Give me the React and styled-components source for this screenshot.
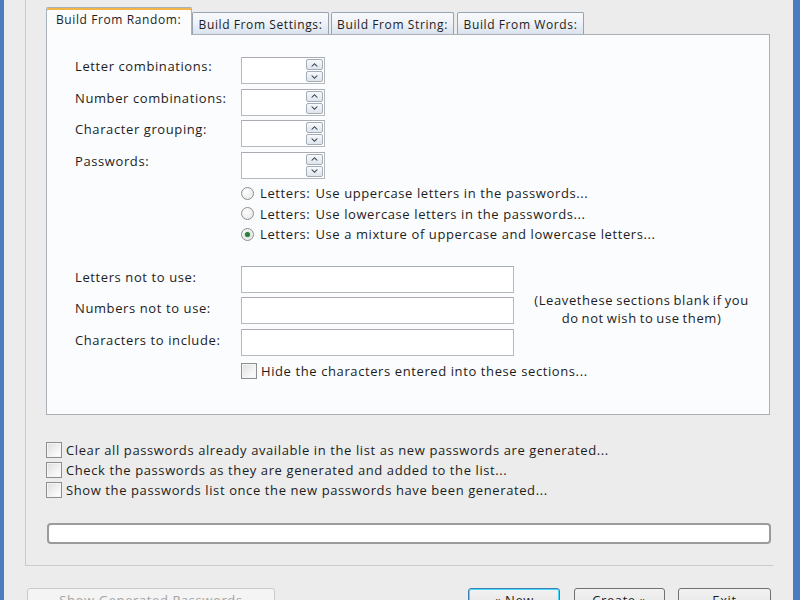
import React, { useState } from "react";
import styled, { createGlobalStyle, css } from "styled-components";

const Global = createGlobalStyle`
  html, body {
    margin: 0;
    padding: 0;
    background: #ececec;
    overflow: hidden;
  }
`;

const Window = styled.div`
  width: 800px;
  height: 600px;
  box-sizing: border-box;
  border-left: 4px solid #4b7cc0;
  border-right: 7px solid #4b7cc0;
  background: #ececec;
  font-family: "Open Sans", "Segoe UI", sans-serif;
  font-size: 13px;
  letter-spacing: 0.6px;
  color: #1d1d1d;
  overflow: hidden;
  display: flex;
  flex-direction: column;
`;

const GroupBox = styled.div`
  margin-left: 21px;
  width: 748px;
  height: 566px;
  flex-shrink: 0;
  box-sizing: border-box;
  border-left: 1px solid #cbcbcb;
  border-bottom: 1px solid #cbcbcb;
  padding: 7px 0 0 20px;
  display: flex;
  flex-direction: column;
`;

const TabBar = styled.div`
  display: flex;
  align-items: flex-end;
  height: 27px;
  position: relative;
  z-index: 1;
`;

const Tab = styled.div`
  box-sizing: border-box;
  width: ${(p) => p.$w}px;
  margin-left: ${(p) => p.$gap || 0}px;
  display: flex;
  align-items: center;
  font-size: 12px;
  white-space: nowrap;
  border: 1px solid #98a3b2;
  border-bottom: none;
  border-radius: 2px 2px 0 0;
  ${(p) =>
    p.$active
      ? css`
          height: 28px;
          margin-bottom: -1px;
          padding: 0 0 5px 9px;
          background: #fcfcfd;
          border-color: #a9b1bc;
          box-shadow: inset 0 2px 0 #f0b546;
        `
      : css`
          height: 22px;
          justify-content: center;
          padding-top: 1px;
          background: linear-gradient(#f8f9fb 0%, #eef2f7 50%, #d9e2ee 100%);
        `}
`;

const Panel = styled.div`
  width: 724px;
  height: 381px;
  box-sizing: border-box;
  border: 1px solid #aab0b6;
  background: #fbfcfd;
  padding: 22px 0 0 28px;
  display: flex;
  flex-direction: column;
`;

const SpinRow = styled.div`
  display: flex;
  align-items: flex-start;
  height: 31.5px;
`;

const Label = styled.div`
  width: 166px;
  line-height: 18px;
  padding-top: ${(p) => p.$top ?? 0}px;
  flex-shrink: 0;
  white-space: nowrap;
`;

const SpinBox = styled.div`
  width: 84px;
  height: 27px;
  box-sizing: border-box;
  border: 1px solid #b5b9be;
  border-top-color: #a9adb3;
  background: #ffffff;
  display: flex;
  justify-content: flex-end;
  align-items: center;
  padding-right: 1px;
`;

const SpinButtons = styled.div`
  width: 17px;
  height: 23px;
  display: flex;
  flex-direction: column;
  gap: 1px;
`;

const SpinHalf = styled.div`
  flex: 1;
  border: 1px solid #a3adb9;
  border-radius: 2px;
  background: linear-gradient(#f7f9fb, #dfe5ec);
  display: flex;
  align-items: center;
  justify-content: center;
`;

const RadioList = styled.div`
  margin-left: 166px;
  display: flex;
  flex-direction: column;
`;

const OptionRow = styled.label`
  display: flex;
  align-items: center;
  height: ${(p) => p.$h || 20.5}px;
  white-space: nowrap;
`;

const RadioDot = styled.span`
  width: 13px;
  height: 13px;
  box-sizing: border-box;
  border-radius: 50%;
  border: 1px solid #8e8f8f;
  background: radial-gradient(circle at 40% 35%, #ffffff, #e2e2e2);
  margin-right: 6px;
  display: flex;
  align-items: center;
  justify-content: center;
  flex-shrink: 0;

  &::after {
    content: "";
    width: 5px;
    height: 5px;
    border-radius: 50%;
    background: ${(p) => (p.$on ? "#2f7a3f" : "transparent")};
    box-shadow: ${(p) => (p.$on ? "0 0 2px #5fbf6a" : "none")};
  }
`;

const Prefix = styled.span`
  margin-right: 5px;
`;

const TextGrid = styled.div`
  margin-top: 21px;
  display: grid;
  grid-template-columns: 166px 273px 1fr;
  grid-auto-rows: 31.8px;
  align-items: start;
`;

const TextBox = styled.div`
  height: 27px;
  box-sizing: border-box;
  border: 1px solid #b5b9be;
  border-top-color: #a9adb3;
  background: #ffffff;
`;

const Note = styled.div`
  grid-column: 3;
  grid-row: 1 / 4;
  align-self: center;
  text-align: center;
  line-height: 18px;
  word-spacing: -1px;
  margin-top: -8px;
`;

const HideRow = styled.div`
  margin-left: 166px;
  margin-top: 1px;
`;

const Check = styled.span`
  width: 16px;
  height: 16px;
  box-sizing: border-box;
  border: 1px solid #8e8f8f;
  background: linear-gradient(135deg, #dedede, #f7f7f7 70%, #ffffff);
  box-shadow: inset 0 0 0 1px #f4f4f4;
  margin-right: 4px;
  flex-shrink: 0;
`;

const Options = styled.div`
  margin-top: 25px;
  display: flex;
  flex-direction: column;
`;

const Progress = styled.div`
  margin-top: 23px;
  margin-left: 1px;
  width: 724px;
  height: 21px;
  box-sizing: border-box;
  border: 2px solid #9b9b9b;
  border-radius: 4px;
  background: #ffffff;
`;

const ButtonRow = styled.div`
  margin-top: 22px;
  padding-left: 23px;
  display: flex;
  align-items: flex-start;
`;

const Button = styled.button`
  width: ${(p) => p.$w}px;
  margin-left: ${(p) => p.$gap || 0}px;
  height: 23px;
  box-sizing: border-box;
  border-radius: 3px;
  font-family: inherit;
  font-size: 13px;
  letter-spacing: inherit;
  padding: 0;
  color: #1d1d1d;
  border: 1px solid #707070;
  background: linear-gradient(#f2f2f2 0%, #ebebeb 50%, #dddddd 51%, #cfcfcf 100%);

  ${(p) =>
    p.$default &&
    css`
      border-color: #3c7fb1;
      box-shadow: inset 0 0 0 1px #48d8fb;
    `}

  &:disabled {
    color: #a3a3a3;
    border-color: #c9c9c9;
    background: #f4f4f4;
  }
`;

const Spacer = styled.div`
  flex: 1;
`;

const Arrow = ({ down }) => (
  <svg width="9" height="6" viewBox="0 0 9 6">
    <path
      d={down ? "M1 1.5 L4.5 5 L8 1.5 L6.5 1.5 L4.5 3.5 L2.5 1.5 Z" : "M1 4.5 L4.5 1 L8 4.5 L6.5 4.5 L4.5 2.5 L2.5 4.5 Z"}
      fill="#3b4a5c"
    />
  </svg>
);

const Spinner = () => (
  <SpinBox>
    <SpinButtons>
      <SpinHalf>
        <Arrow />
      </SpinHalf>
      <SpinHalf>
        <Arrow down />
      </SpinHalf>
    </SpinButtons>
  </SpinBox>
);

const spinFields = [
  "Letter combinations:",
  "Number combinations:",
  "Character grouping:",
  "Passwords:",
];

const letterModes = [
  "Use uppercase letters in the passwords...",
  "Use lowercase letters in the passwords...",
  "Use a mixture of uppercase and lowercase letters...",
];

const textFields = ["Letters not to use:", "Numbers not to use:", "Characters to include:"];

const options = [
  "Clear all passwords already available in the list as new passwords are generated...",
  "Check the passwords as they are generated and added to the list...",
  "Show the passwords list once the new passwords have been generated...",
];

const tabs = [
  { name: "Build From Random:", w: 146 },
  { name: "Build From Settings:", w: 137, gap: 0 },
  { name: "Build From String:", w: 123, gap: 2 },
  { name: "Build From Words:", w: 127, gap: 3 },
];

export default function App() {
  const [mode, setMode] = useState(2);

  return (
    <Window>
      <Global />
      <GroupBox>
        <TabBar>
          {tabs.map((t, i) => (
            <Tab key={t.name} $w={t.w} $gap={t.gap} $active={i === 0}>
              {t.name}
            </Tab>
          ))}
        </TabBar>
        <Panel>
          {spinFields.map((f) => (
            <SpinRow key={f}>
              <Label>{f}</Label>
              <Spinner />
            </SpinRow>
          ))}
          <RadioList>
            {letterModes.map((m, i) => (
              <OptionRow key={m} onClick={() => setMode(i)}>
                <RadioDot $on={mode === i} />
                <Prefix>Letters:</Prefix>
                {m}
              </OptionRow>
            ))}
          </RadioList>
          <TextGrid>
            {textFields.map((f, i) => (
              <React.Fragment key={f}>
                <Label $top={2} style={{ gridRow: i + 1 }}>
                  {f}
                </Label>
                <TextBox style={{ gridRow: i + 1, gridColumn: 2 }} />
              </React.Fragment>
            ))}
            <Note>
              (Leavethese sections blank if you
              <br />
              do not wish to use them)
            </Note>
          </TextGrid>
          <HideRow>
            <OptionRow $h={18}>
              <Check />
              Hide the characters entered into these sections...
            </OptionRow>
          </HideRow>
        </Panel>
        <Options>
          {options.map((o) => (
            <OptionRow key={o} $h={20}>
              <Check />
              {o}
            </OptionRow>
          ))}
        </Options>
        <Progress />
      </GroupBox>
      <ButtonRow>
        <Button $w={248} disabled>
          Show Generated Passwords
        </Button>
        <Spacer />
        <Button $w={92} $default>
          « New
        </Button>
        <Button $w={91} $gap={14}>
          Create »
        </Button>
        <Button $w={93} $gap={13}>
          Exit
        </Button>
        <div style={{ width: 22 }} />
      </ButtonRow>
    </Window>
  );
}
